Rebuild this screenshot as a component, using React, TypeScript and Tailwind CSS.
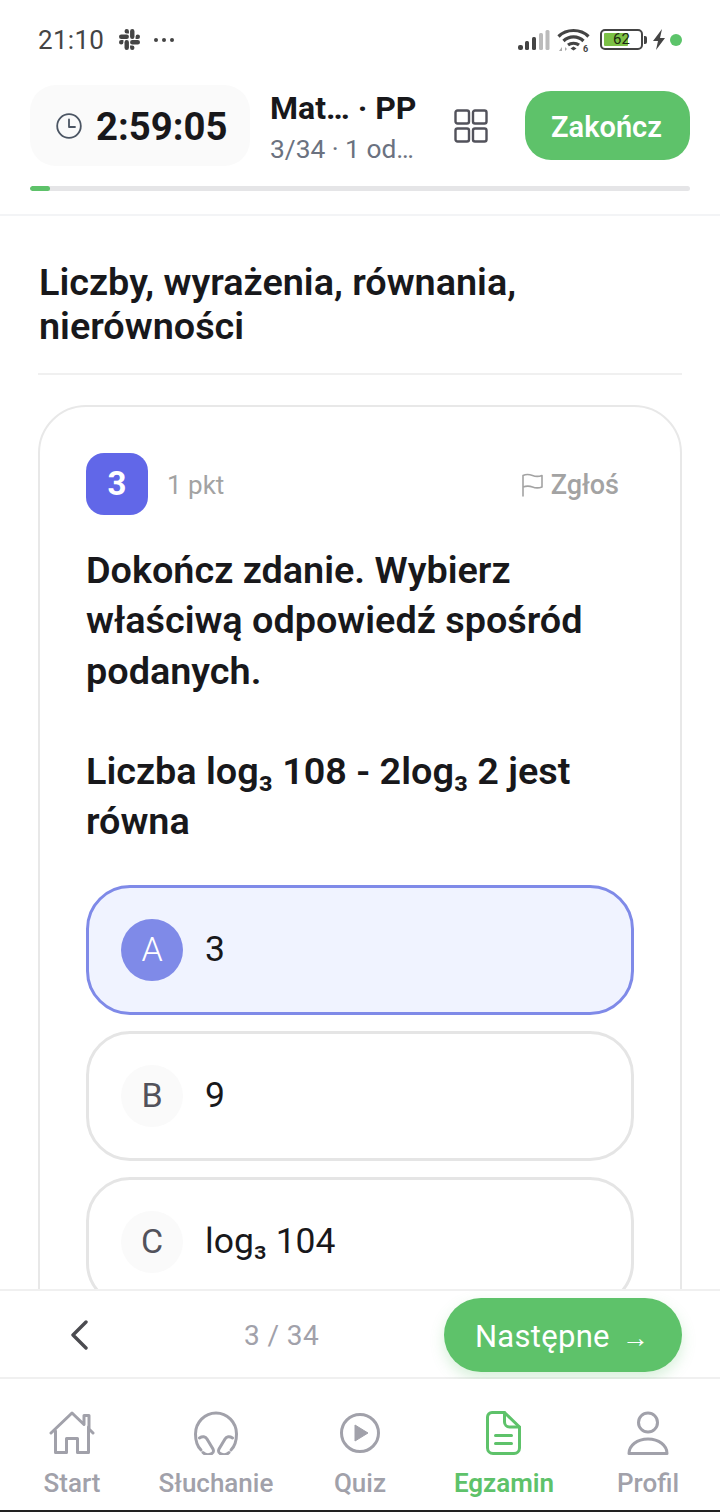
import React from "react";
import { SiSlack } from "react-icons/si";

const GRAY = "#a1a1aa";

function StatusBar() {
  return (
    <div className="h-[78px] shrink-0 flex items-center justify-between pl-[38px] pr-[38px] pt-[1px] text-[#444]">
      <div className="flex items-center">
        <span className="text-[26px] leading-none tracking-[0.3px] text-[#444]">21:10</span>
        <SiSlack className="ml-[15px] w-[21px] h-[21px] text-[#444]" />
        <span className="ml-[14px] flex gap-[4px]">
          <i className="w-[4px] h-[4px] rounded-full bg-[#444]" />
          <i className="w-[4px] h-[4px] rounded-full bg-[#444]" />
          <i className="w-[4px] h-[4px] rounded-full bg-[#444]" />
        </span>
      </div>
      <div className="flex items-center">
        <svg width="32" height="22" viewBox="0 0 32 22">
          <rect x="0" y="16" width="5" height="5" rx="2" fill="#444" />
          <rect x="7" y="12" width="4" height="9" rx="1.5" fill="#444" />
          <rect x="14" y="8" width="4" height="13" rx="1.5" fill="#444" />
          <rect x="21" y="4" width="4" height="17" rx="1.5" fill="#bbb" />
          <rect x="27.5" y="1" width="4" height="20" rx="1.5" fill="#bbb" />
        </svg>
        <svg className="ml-[7px]" width="33" height="26" viewBox="0 0 33 26">
          <path d="M1.5 9.5C9.5 1.5 23.5 1.5 31.5 9.5" fill="none" stroke="#444" strokeWidth="3.2" />
          <path d="M6.5 14C12 8.5 21 8.5 26.5 14" fill="none" stroke="#444" strokeWidth="3.2" />
          <path d="M11 18C14 15.5 19 15.5 22 18" fill="none" stroke="#444" strokeWidth="3" />
          <path d="M13.5 21.5l3-2 3 2-3 2z" fill="#444" />
          <path d="M2 24l3-4v4zM8 24v-4l2 2" fill="#aaa" />
          <text x="26" y="25" fontSize="9" fontWeight="700" fill="#444" fontFamily="Roboto">6</text>
        </svg>
        <div className="ml-[10px] flex items-center">
          <div className="relative w-[43px] h-[21px] rounded-[5px] border-[2px] border-[#444] overflow-hidden p-[2px]">
            <div className="w-[24px] h-full bg-[#7cc146] rounded-[1px]" />
            <span className="absolute inset-0 flex items-center justify-center text-[15px] leading-none text-[#1c2a10]">62</span>
          </div>
          <div className="ml-[1px] w-[3px] h-[8px] rounded-r-[2px] bg-[#444]" />
        </div>
        <svg className="ml-[5px]" width="14" height="21" viewBox="0 0 14 21">
          <path d="M10 0L1 12h5l-2 9 9-12H8z" fill="#444" />
        </svg>
        <div className="ml-[4px] w-[12px] h-[12px] rounded-full bg-[#5cc46a]" />
      </div>
    </div>
  );
}

function Header() {
  return (
    <div className="h-[138px] shrink-0 border-b-[2px] border-[#f3f4f6] px-[30px] pt-[7px]">
      <div className="flex items-start">
        <div className="w-[220px] h-[81px] rounded-[26px] bg-[#fafafa] flex items-center pl-[26px]">
          <svg width="26" height="26" viewBox="0 0 26 26" fill="none" stroke="#4b5563" strokeWidth="1.8" strokeLinecap="round" strokeLinejoin="round">
            <circle cx="13" cy="13" r="11.8" />
            <path d="M13 6.5V14h6" />
          </svg>
          <span className="ml-[14px] pt-[3px] text-[38.3px] leading-none font-bold text-[#18181b]">2:59:05</span>
        </div>
        <div className="ml-[20px] w-[150px] pt-[5px]">
          <div className="text-[32px] leading-[36px] font-bold text-[#18181b] whitespace-nowrap">Mat… · PP</div>
          <div className="mt-[6px] text-[26.3px] leading-[34px] text-[#6b7280] whitespace-nowrap">3/34 · 1 od…</div>
        </div>
        <svg className="ml-[34px] mt-[24px]" width="34" height="34" viewBox="0 0 34 34" fill="none" stroke="#52525b" strokeWidth="2.4" strokeLinejoin="round">
          <rect x="1.5" y="1.5" width="13.5" height="13" rx="2" />
          <rect x="19" y="1.5" width="13.5" height="13" rx="2" />
          <rect x="1.5" y="19.5" width="13.5" height="13" rx="2" />
          <rect x="19" y="19.5" width="13.5" height="13" rx="2" />
        </svg>
        <button className="ml-auto mt-[6px] w-[165px] h-[69px] rounded-[26px] bg-[#5ec26a] text-white text-[29px] font-semibold leading-none pt-[3px] pr-[2px]">Zakończ</button>
      </div>
      <div className="mt-[20px] h-[5px] rounded-full bg-[#e5e5e7] overflow-hidden">
        <div className="w-[20px] h-full rounded-full bg-[#5ec26a]" />
      </div>
    </div>
  );
}

function Option({ letter, children, selected }: { letter: string; children: React.ReactNode; selected?: boolean }) {
  return (
    <div className={selected
      ? "shrink-0 h-[130px] rounded-[44px] border-[3px] border-[#7f8ae8] bg-[#f0f3ff] flex items-center pl-[32px]"
      : "shrink-0 h-[130px] rounded-[44px] border-[3px] border-[#e5e5e5] bg-white flex items-center pl-[32px]"}>
      <div className={selected
        ? "w-[62px] h-[62px] rounded-full bg-[#7f8ae8] text-white flex items-center justify-center text-[34px] font-light"
        : "w-[62px] h-[62px] rounded-full bg-[#fafafa] text-[#52525b] flex items-center justify-center text-[34px]"}>{letter}</div>
      <span className="ml-[22px] text-[35.5px] leading-none text-[#18181b]">{children}</span>
    </div>
  );
}

function Main() {
  return (
    <div className="flex-1 min-h-0 overflow-hidden px-[38px]">
      <h1 className="pt-[44px] text-[37.8px] leading-[44px] font-semibold text-[#18181b] pl-[1px]">Liczby, wyrażenia, równania,<br />nierówności</h1>
      <div className="mt-[25px] h-[2px] bg-[#f0f0f0]" />
      <div className="mt-[30px] rounded-[48px] border-[2px] border-[#e8e8e8] px-[46px] pt-[46px] pb-[40px]">
        <div className="flex items-center">
          <div className="w-[62px] h-[62px] rounded-[18px] bg-[#6167e8] text-white flex items-center justify-center text-[33px] font-bold">3</div>
          <span className="ml-[19px] pt-[2px] text-[26px] text-[#a3a3a3]">1 pkt</span>
          <div className="ml-auto mr-[15px] pt-[2px] flex items-center text-[#a3a3a3]">
            <svg width="24" height="24" viewBox="0 0 24 24" fill="none" stroke="#a3a3a3" strokeWidth="1.6" strokeLinejoin="round" strokeLinecap="round">
              <path d="M3 23V2.5C7 0.5 10 1.5 12.5 2.5S18 4 22 2.5V14C18 15.5 15 15 12.5 14S7 12.5 3 14" />
            </svg>
            <span className="ml-[7px] text-[27px] font-medium">Zgłoś</span>
          </div>
        </div>
        <div className="mt-[30px] text-[37.8px] leading-[50.3px] font-semibold text-[#18181b]">
          Dokończ zdanie. Wybierz<br />właściwą odpowiedź spośród<br />podanych.<br /><br />Liczba log₃ 108 - 2log₃ 2 jest<br />równa
        </div>
        <div className="mt-[38px] flex flex-col gap-[16px]">
          <Option letter="A" selected>3</Option>
          <Option letter="B">9</Option>
          <Option letter="C">log₃ 104</Option>
        </div>
      </div>
    </div>
  );
}

function Pager() {
  return (
    <div className="h-[90px] shrink-0 border-t-[2px] border-[#f0f0f0] border-b-[2px] bg-white flex items-center pl-[68px] pr-[38px] pt-[2px]">
      <svg width="22" height="30" viewBox="0 0 22 30" fill="none" stroke="#4b4b50" strokeWidth="3.4" strokeLinecap="round" strokeLinejoin="round">
        <path d="M18 2L5 15l13 13" />
      </svg>
      <span className="ml-[154px] pt-[2px] text-[28px] text-[#a1a1aa] tracking-[0.4px]">3 / 34</span>
      <button className="ml-auto w-[238px] h-[74px] rounded-full bg-[#5ec26a] text-white text-[31px] leading-none tracking-[0.3px] pr-[2px] pt-[2px] shadow-[0_6px_14px_rgba(94,194,106,0.25)]">Następne <span className="ml-[4px] text-[27px]">→</span></button>
    </div>
  );
}

function Tab({ label, active, children }: { label: string; active?: boolean; children: React.ReactNode }) {
  return (
    <div className="w-[144px] flex flex-col items-center">
      <div className="h-[44px] flex items-center justify-center">{children}</div>
      <span className={active ? "mt-[10px] text-[26px] leading-[36px] font-semibold text-[#5ec26a] whitespace-nowrap" : "mt-[10px] text-[26px] leading-[36px] font-medium text-[#a1a1aa] whitespace-nowrap"}>{label}</span>
    </div>
  );
}

function TabBar() {
  return (
    <div className="h-[133px] shrink-0 bg-white border-b-[2px] border-[#222] pt-[32px] flex justify-center">
      <Tab label="Start">
        <svg width="46" height="44" viewBox="0 0 46 44" fill="none" stroke={GRAY} strokeWidth="3" strokeLinecap="round" strokeLinejoin="round">
          <path d="M2 22L23 2l12 11.5V4.5h5V18l4 4" />
          <path d="M6.500 20v21.500h11V27.500h11v14h11V16" />
        </svg>
      </Tab>
      <Tab label="Słuchanie">
        <svg width="44" height="44" viewBox="0 0 44 44" fill="none" stroke={GRAY} strokeWidth="3" strokeLinecap="round" strokeLinejoin="round">
          <path d="M7 39C3 35 1.500 30 1.500 23a20.500 21 0 0 1 41 0c0 7-1.500 12-5.500 16" />
          <path d="M5.500 27c3-2 6-1.500 7.500 1l6 10c1 2.500 .5 4-2 5s-6 .5-8-1.500" />
          <path d="M38.500 27c-3-2-6-1.500-7.500 1l-6 10c-1 2.500-.5 4 2 5s6 .5 8-1.500" />
        </svg>
      </Tab>
      <Tab label="Quiz">
        <svg width="42" height="42" viewBox="0 0 42 42" fill="none" stroke={GRAY} strokeWidth="3" strokeLinejoin="round">
          <circle cx="21" cy="21" r="18.500" />
          <path d="M16 13l13 8-13 8z" fill={GRAY} strokeWidth="1" />
        </svg>
      </Tab>
      <Tab label="Egzamin" active>
        <svg width="36" height="44" viewBox="0 0 36 44" fill="none" stroke="#5ec26a" strokeWidth="3" strokeLinecap="round" strokeLinejoin="round">
          <path d="M6 1.500h12.500L33.500 16v21a5.500 5.500 0 0 1-5.500 5.500H7A5.500 5.500 0 0 1 1.500 37V6A4.500 4.500 0 0 1 6 1.500z" />
          <path d="M18.500 1.500V11a5 5 0 0 0 5 5h10" />
          <path d="M9.500 24.500h16M9.500 32.500h16" />
        </svg>
      </Tab>
      <Tab label="Profil">
        <svg width="42" height="44" viewBox="0 0 42 44" fill="none" stroke={GRAY} strokeWidth="3" strokeLinecap="round" strokeLinejoin="round">
          <circle cx="21" cy="11.500" r="9.500" />
          <path d="M2 42.500c0-8 8-14.500 19-14.500s19 6.500 19 14.500z" />
        </svg>
      </Tab>
    </div>
  );
}

export default function App() {
  return (
    <div className="h-[1512px] w-[720px] bg-white flex flex-col overflow-hidden font-['Roboto',sans-serif]">
      <StatusBar />
      <Header />
      <Main />
      <Pager />
      <TabBar />
    </div>
  );
}
